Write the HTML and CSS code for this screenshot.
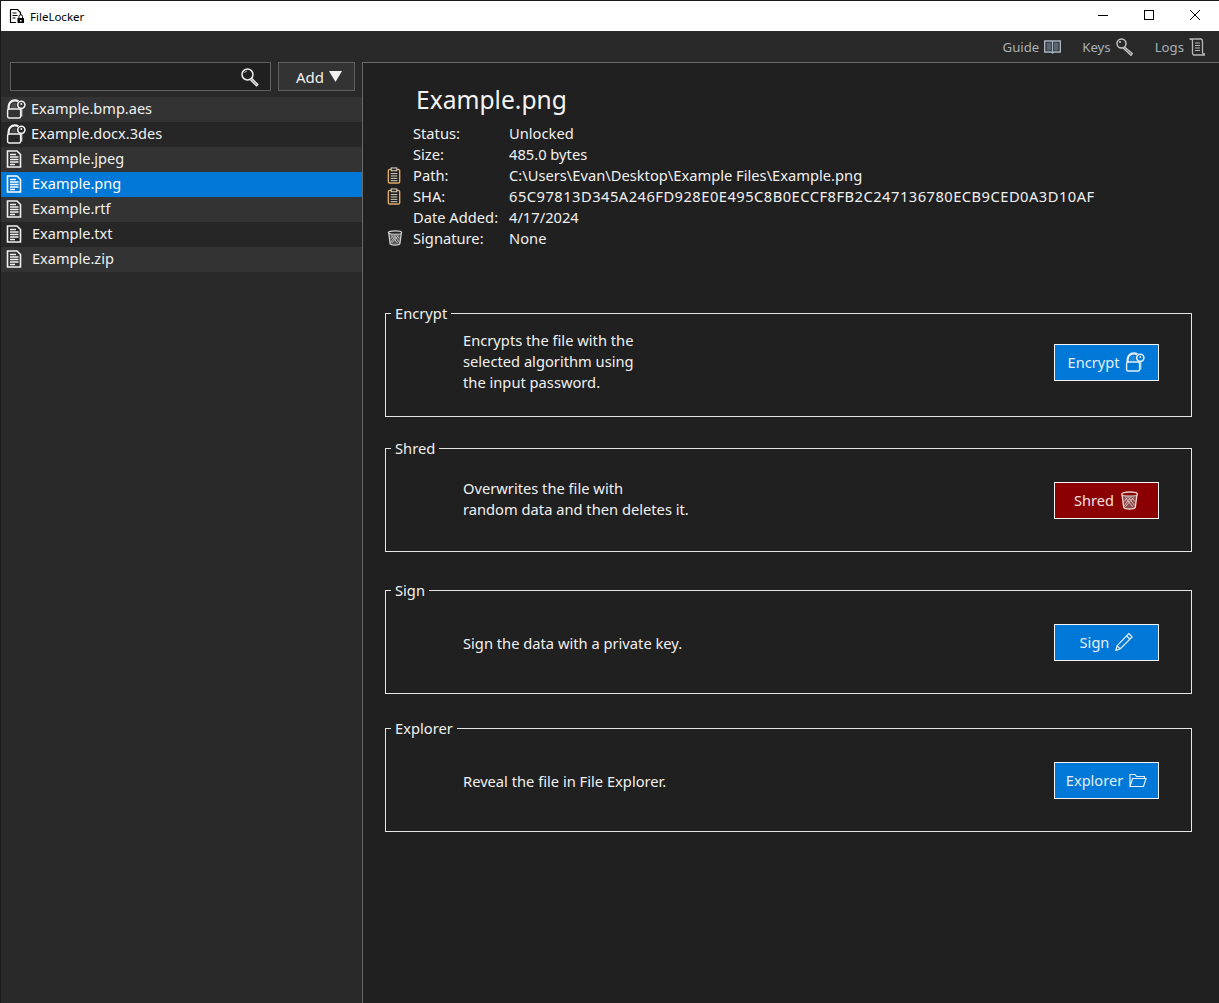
FILE: index.html
```html
<!DOCTYPE html>
<html lang="en">
<head>
<meta charset="utf-8">
<title>FileLocker</title>
<link rel="stylesheet" href="styles.css">
</head>
<body>
<svg class="defs" width="0" height="0" aria-hidden="true">
  <defs>
    <symbol id="i-doc" viewBox="0 0 16 18">
      <path d="M1.500 1h9.500l3.500 3.500v12.500h-13z" fill="none" stroke="currentColor" stroke-width="1.600"/>
      <path d="M4 4.500h6M4 7h8.500M4 9.500h8.500M4 12h8.500M4 14.500h5" fill="none" stroke="currentColor" stroke-width="1.500"/>
    </symbol>
    <symbol id="i-lock" viewBox="0 0 20 20">
      <path d="M2.600 10.500V8C2.600 4 5.200 1.300 8.800 1.300c1.400 0 2.600.4 3.500 1.100" fill="none" stroke="currentColor" stroke-width="2.200"/>
      <path d="M5 10V8c0-2.500 1.600-4.300 3.800-4.300.5 0 1 .1 1.400.3L10.500 10z" fill="currentColor" fill-opacity=".14"/>
      <rect x="1.600" y="10" width="13" height="9" rx="1.500" fill="none" stroke="currentColor" stroke-width="1.400"/>
      <path d="M15.600 9.500V17.500" stroke="currentColor" stroke-opacity=".75" stroke-width="1.600"/>
      <circle cx="15.300" cy="5.800" r="3.600" fill="none" stroke="currentColor" stroke-width="1.600"/>
      <circle cx="15.300" cy="5" r="1" fill="currentColor"/>
    </symbol>
    <symbol id="i-trash" viewBox="0 0 18 18">
      <ellipse cx="9" cy="3" rx="7.500" ry="2" fill="none" stroke="currentColor" stroke-width="1.300"/>
      <path d="M2 4l1.500 11.500c1 2 10 2 11 0L16 4" fill="#888" fill-opacity=".55" stroke="currentColor" stroke-width="1.300"/>
      <path d="M5 6l7 9M8 6l6 8M11 6l3 4M13 6l-8 9M10 6l-6 8M7 6l-3 4" fill="none" stroke="currentColor" stroke-width=".8"/>
    </symbol>
    <symbol id="i-clip" viewBox="0 0 14 18">
      <rect x="1" y="2.500" width="12" height="14.500" rx="1.500" fill="none" stroke="#e0a865" stroke-width="1.500"/>
      <rect x="4" y="1" width="6" height="3" fill="#2a2a2a" stroke="#e8e0d0" stroke-width="1"/>
      <path d="M3.500 7h7M3.500 9.500h7M3.500 12h7M3.500 14.500h7" fill="none" stroke="#e8e0d0" stroke-width="1"/>
    </symbol>
  </defs>
</svg>
<div class="window">
  <header class="titlebar">
    <div class="app">
      <svg class="app-icon" width="16" height="16" viewBox="0 0 16 16">
        <path d="M7 14.500H1.500v-13h7l3 3V7" fill="none" stroke="#000" stroke-width="1.200"/>
        <path d="M3.500 5h4M3.500 7.500h5M3.500 10h3" fill="none" stroke="#000" stroke-width="1"/>
        <rect x="8.500" y="10" width="6.500" height="5" fill="#000"/>
        <path d="M10 10V8.500a1.700 1.700 0 0 1 3.500 0V10" fill="none" stroke="#000" stroke-width="1"/>
        <rect x="11" y="12" width="1.500" height="1.500" fill="#fff"/>
      </svg>
      <span>FileLocker</span>
    </div>
    <div class="caption">
      <span class="cap-btn"><svg width="12" height="12" viewBox="0 0 12 12"><path d="M1 6.500h10" stroke="#000" stroke-width="1"/></svg></span>
      <span class="cap-btn"><svg width="12" height="12" viewBox="0 0 12 12"><rect x="1.500" y="1.500" width="9" height="9" fill="none" stroke="#000"/></svg></span>
      <span class="cap-btn"><svg width="12" height="12" viewBox="0 0 12 12"><path d="M1 1l10 10M11 1L1 11" stroke="#000" stroke-width="1"/></svg></span>
    </div>
  </header>
  <nav class="toolbar">
    <a class="tool tool-guide">Guide
      <svg width="17" height="14" viewBox="0 0 17 14"><path d="M2.500 2.500h4.500v8h-4.500zM10 2.500h4.500v8H10z" fill="#5c6670"/><path d="M.700 1h15.600v11h-6l-1.800 1-1.800-1h-6zM8.500 1v12" fill="none" stroke="#a9b6c4" stroke-width="1.400"/></svg>
    </a>
    <a class="tool tool-keys">Keys
      <svg width="18" height="18" viewBox="0 0 18 18"><circle cx="5.500" cy="5.500" r="4.500" fill="none" stroke="#c8c8c8" stroke-width="1.400"/><circle cx="4" cy="4" r="1" fill="#c8c8c8"/><path d="M8.500 9l8 6.500-1.500 2-8-7.500" fill="#777" stroke="#c8c8c8" stroke-width="1.100"/></svg>
    </a>
    <a class="tool tool-logs">Logs
      <svg width="16" height="18" viewBox="0 0 16 18"><path d="M.500 1h11.500c1.500 0 1.500 2 1.500 3v10.500c0 1 1.500 1.500 2 1.500v1H5c-1 0-1.500-1-1.500-2V3C3.500 2 3 1 .500 1z" fill="none" stroke="#b8b8b8" stroke-width="1.300"/><path d="M6 5h5M6 7.500h5M6 10h5M6 12.500h5" stroke="#b8b8b8"/></svg>
    </a>
  </nav>
  <div class="panes">
    <aside class="side">
      <div class="side-top">
        <div class="search">
          <svg width="20" height="20" viewBox="0 0 20 20"><circle cx="7.500" cy="7.500" r="5.500" fill="none" stroke="#eee" stroke-width="1.500"/><path d="M4.500 6a3 3 0 0 1 2.500-2" fill="none" stroke="#bbb"/><path d="M12 11.500l6 6-1.500 1.500-6-6" fill="#999" stroke="#eee" stroke-width="1.100"/></svg>
        </div>
        <button class="add">Add <svg width="13" height="11" viewBox="0 0 13 11"><path d="M0 0h13L6.500 11z" fill="#f0f0f0"/></svg></button>
      </div>
      <ul class="files">
        <li class="file locked"><svg class="ficon" width="20" height="20"><use href="#i-lock"/></svg><span class="fname">Example.bmp.aes</span></li>
        <li class="file locked"><svg class="ficon" width="20" height="20"><use href="#i-lock"/></svg><span class="fname">Example.docx.3des</span></li>
        <li class="file"><svg class="ficon" width="16" height="18"><use href="#i-doc"/></svg><span class="fname">Example.jpeg</span></li>
        <li class="file selected"><svg class="ficon" width="16" height="18"><use href="#i-doc"/></svg><span class="fname">Example.png</span></li>
        <li class="file"><svg class="ficon" width="16" height="18"><use href="#i-doc"/></svg><span class="fname">Example.rtf</span></li>
        <li class="file"><svg class="ficon" width="16" height="18"><use href="#i-doc"/></svg><span class="fname">Example.txt</span></li>
        <li class="file"><svg class="ficon" width="16" height="18"><use href="#i-doc"/></svg><span class="fname">Example.zip</span></li>
      </ul>
    </aside>
    <main class="detail">
      <h1 class="name">Example.png</h1>
      <dl class="info">
        <div class="row"><dt>Status:</dt><dd>Unlocked</dd></div>
        <div class="row"><dt>Size:</dt><dd>485.0 bytes</dd></div>
        <div class="row"><svg class="row-icon" width="14" height="17"><use href="#i-clip"/></svg><dt>Path:</dt><dd>C:\Users\Evan\Desktop\Example Files\Example.png</dd></div>
        <div class="row"><svg class="row-icon" width="14" height="17"><use href="#i-clip"/></svg><dt>SHA:</dt><dd class="hash">65C97813D345A246FD928E0E495C8B0ECCF8FB2C247136780ECB9CED0A3D10AF</dd></div>
        <div class="row"><dt>Date Added:</dt><dd>4/17/2024</dd></div>
        <div class="row"><svg class="row-icon trash" width="16" height="16"><use href="#i-trash"/></svg><dt>Signature:</dt><dd>None</dd></div>
      </dl>
      <section class="group g-encrypt">
        <span class="legend">Encrypt</span>
        <p class="desc">Encrypts the file with the<br>selected algorithm using<br>the input password.</p>
        <button class="act">Encrypt <svg width="20" height="20"><use href="#i-lock"/></svg></button>
      </section>
      <section class="group g-shred">
        <span class="legend">Shred</span>
        <p class="desc">Overwrites the file with<br>random data and then deletes it.</p>
        <button class="act danger">Shred <svg class="btn-trash" width="19" height="19"><use href="#i-trash"/></svg></button>
      </section>
      <section class="group g-sign">
        <span class="legend">Sign</span>
        <p class="desc">Sign the data with a private key.</p>
        <button class="act">Sign <svg width="18" height="18" viewBox="1.500 1 15.500 16"><path d="M13.500 1.500l3 3L6 15l-4 1.500L3 12.500zM11.500 3.500l3 3M3 12.500L6 15" fill="none" stroke="currentColor" stroke-width="1.100"/></svg></button>
      </section>
      <section class="group g-explorer">
        <span class="legend">Explorer</span>
        <p class="desc">Reveal the file in File Explorer.</p>
        <button class="act">Explorer <svg width="18" height="15" viewBox="0 0 18 15"><path d="M1 13.500V1.500h5l1.500 2h8v2M1 13.500h13.500l2.500-8H3.500L1 13.500z" fill="none" stroke="currentColor" stroke-width="1.200"/></svg></button>
      </section>
    </main>
  </div>
</div>
</body>
</html>
```
FILE: styles.css
```css
* { box-sizing: border-box; }
html, body { margin: 0; height: 100%; }
body { background: #202020; font-family: "Noto Sans", "Open Sans", sans-serif; font-size: 14.700px; color: #f0f0f0; overflow: hidden; }
.defs { position: absolute; }
.window { height: 1003px; display: flex; flex-direction: column; border-left: 1px solid #1a1a1a; border-top: 1px solid #1a1a1a; }
.titlebar { height: 30px; background: #fff; color: #000; display: flex; justify-content: space-between; align-items: center; flex: none; }
.app { display: flex; align-items: center; gap: 5px; padding-left: 8px; font-size: 11.500px; }
.caption { display: flex; padding-right: 1px; }
.cap-btn { width: 46px; height: 30px; display: flex; align-items: center; justify-content: center; padding-bottom: 2px; }
.toolbar { height: 31px; background: #292929; display: flex; justify-content: flex-end; align-items: center; flex: none; padding-right: 14px; gap: 21px; font-size: 13.200px; color: #a8b0b8; }
.tool { display: flex; align-items: center; gap: 5px; }
.panes { flex: 1; display: flex; min-height: 0; }
.side { width: 361px; flex: none; background: #292929; }
.side-top { display: flex; gap: 7px; padding-left: 9px; height: 35px; }
.search { width: 261px; height: 29px; border: 1px solid #5f5f5f; background: #202020; display: flex; justify-content: flex-end; align-items: center; padding-right: 10px; }
.add { width: 77px; height: 29px; border: 1px solid #5f5f5f; background: #333; color: #f0f0f0; font: inherit; font-size: 15px; display: flex; align-items: center; justify-content: center; gap: 5px; padding: 0 0 0 5px; }
.files { list-style: none; margin: 0; padding: 0; }
.file { height: 25px; display: flex; align-items: center; font-size: 14.550px; color: #f0f0f0; padding-left: 31px; position: relative; }
.fname { position: relative; top: -2px; }
.file:nth-child(odd) { background: #333; }
.file:nth-child(even) { background: #262626; }
.file.selected { background: #0078d7; color: #fff; }
.ficon { position: absolute; left: 5px; top: 3px; }
.file.locked { padding-left: 30px; }
.file.locked .ficon { top: 2px; }
.detail { flex: 1; background: #202020; border-left: 1px solid #6a6a6a; border-top: 1px solid #6a6a6a; padding: 22px 27px 0 22px; }
.name { margin: 0 0 0 31px; font-size: 24.600px; font-weight: 400; line-height: 30px; color: #f4f4f4; }
.info { margin: 8px 0 0 28px; }
.row { display: flex; height: 21px; line-height: 21px; position: relative; }
.row dt { width: 96px; }
.row dd { margin: 0; }
.row dd.hash { letter-spacing: .48px; }
.row-icon { position: absolute; left: -26px; top: 2px; }
.row-icon.trash { color: #d8d8d8; left: -26px; }
.group { position: relative; height: 104px; border: 1px solid #e6e6e6; display: flex; align-items: center; justify-content: space-between; padding: 0 32px 0 77px; }
.g-encrypt { margin-top: 64px; padding-bottom: 6px; }
.g-shred { margin-top: 31px; }
.g-sign { margin-top: 38px; }
.g-explorer { margin-top: 34px; }
.g-encrypt .desc, .g-shred .desc { margin-bottom: 2px; }
.g-sign .desc, .g-explorer .desc { margin-top: 2px; }
.legend { position: absolute; left: 5px; top: -11px; padding: 0 4px; background: #202020; line-height: 20px; }
.desc { margin: 0; line-height: 21px; }
.act { width: 105px; height: 37px; border: 1px solid #f4f4f4; background: #0078d7; color: #e4eef8; font: inherit; font-size: 14.600px; display: flex; align-items: center; justify-content: center; gap: 6px; padding: 0; }
.act.danger { background: #8b0000; color: #f0e0e0; }
.btn-trash { color: #f0d0d0; }
```
